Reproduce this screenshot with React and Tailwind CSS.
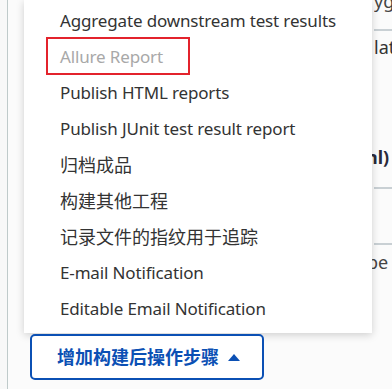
import React from "react";

const items = [
  { t: "Aggregate downstream test results", latin: true },
  { t: "Allure Report", latin: true },
  { t: "Publish HTML reports", latin: true },
  { t: "Publish JUnit test result report", latin: true },
  { t: "归档成品" },
  { t: "构建其他工程" },
  { t: "记录文件的指纹用于追踪" },
  { t: "E-mail Notification", latin: true },
  { t: "Editable Email Notification", latin: true },
];

const font = { fontFamily: '"Noto Sans", "Noto Sans CJK SC", sans-serif' };

export default function App() {
  return (
    <div
      className="relative w-[392px] h-[389px] overflow-hidden bg-[#f8f8f8] text-[18px] text-[#333]"
      style={font}
    >
      {/* page underneath */}
      <div className="h-full ml-[7px] border-l border-[#bfcaca] flex flex-col">
        <div className="flex-1 flex flex-col pl-[366px] bg-[#fbfbfb] whitespace-nowrap text-[18px]">
          <div className="h-[29px] overflow-hidden">
            <div className="-mt-[10px] leading-[22px] text-[#444]">ygu</div>
          </div>
          <div className="h-[2px] bg-[#c9d0d4]" />
          <div className="pt-[5px] leading-[22px] h-[115px]">lat</div>
          <div className="-ml-[8px] font-bold text-[#2a2a3a] leading-[22px] h-[41px]">nl)</div>
          <div className="h-[2px] bg-[#c9d0d4]" />
          <div className="h-[54px]" />
          <div className="h-[2px] bg-[#c9d0d4]" />
          <div className="-ml-[7px] pt-[6px] leading-[22px] text-[#444]">be</div>
        </div>
      </div>

      {/* dropdown menu */}
      <div className="absolute left-[24px] top-0 w-[348px] bg-white pt-[3px] pb-[6px] shadow-[0_2px_8px_rgba(0,0,0,0.18)]">
        {items.map((it, i) => (
          <div
            key={it.t}
            className={
              "relative h-[36px] flex items-center pl-[36px] whitespace-nowrap " +
              (it.latin ? "text-[17px] tracking-[-0.15px] " : "text-[18px] ") +
              (i === 1 ? "text-[#a8a8a8]" : "text-[#333]")
            }
          >
            {i === 1 && (
              <div className="absolute left-[22px] top-[-2px] w-[144px] h-[38px] border-2 border-[#e3232c]" />
            )}
            <span className="relative">{it.t}</span>
          </div>
        ))}
      </div>

      {/* button */}
      <div className="absolute left-[30px] top-[334px]">
        <button className="h-[46px] w-[234px] flex items-center pl-[25px] gap-[9px] bg-white border-2 border-[#0b50b4] rounded-[5px] text-[#0b50b4] font-bold text-[18px]">
          <span>增加构建后操作步骤</span>
          <svg width="12" height="7" viewBox="0 0 12 7">
            <path d="M0 7 L6 0 L12 7 Z" fill="#0b50b4" />
          </svg>
        </button>
      </div>
    </div>
  );
}
